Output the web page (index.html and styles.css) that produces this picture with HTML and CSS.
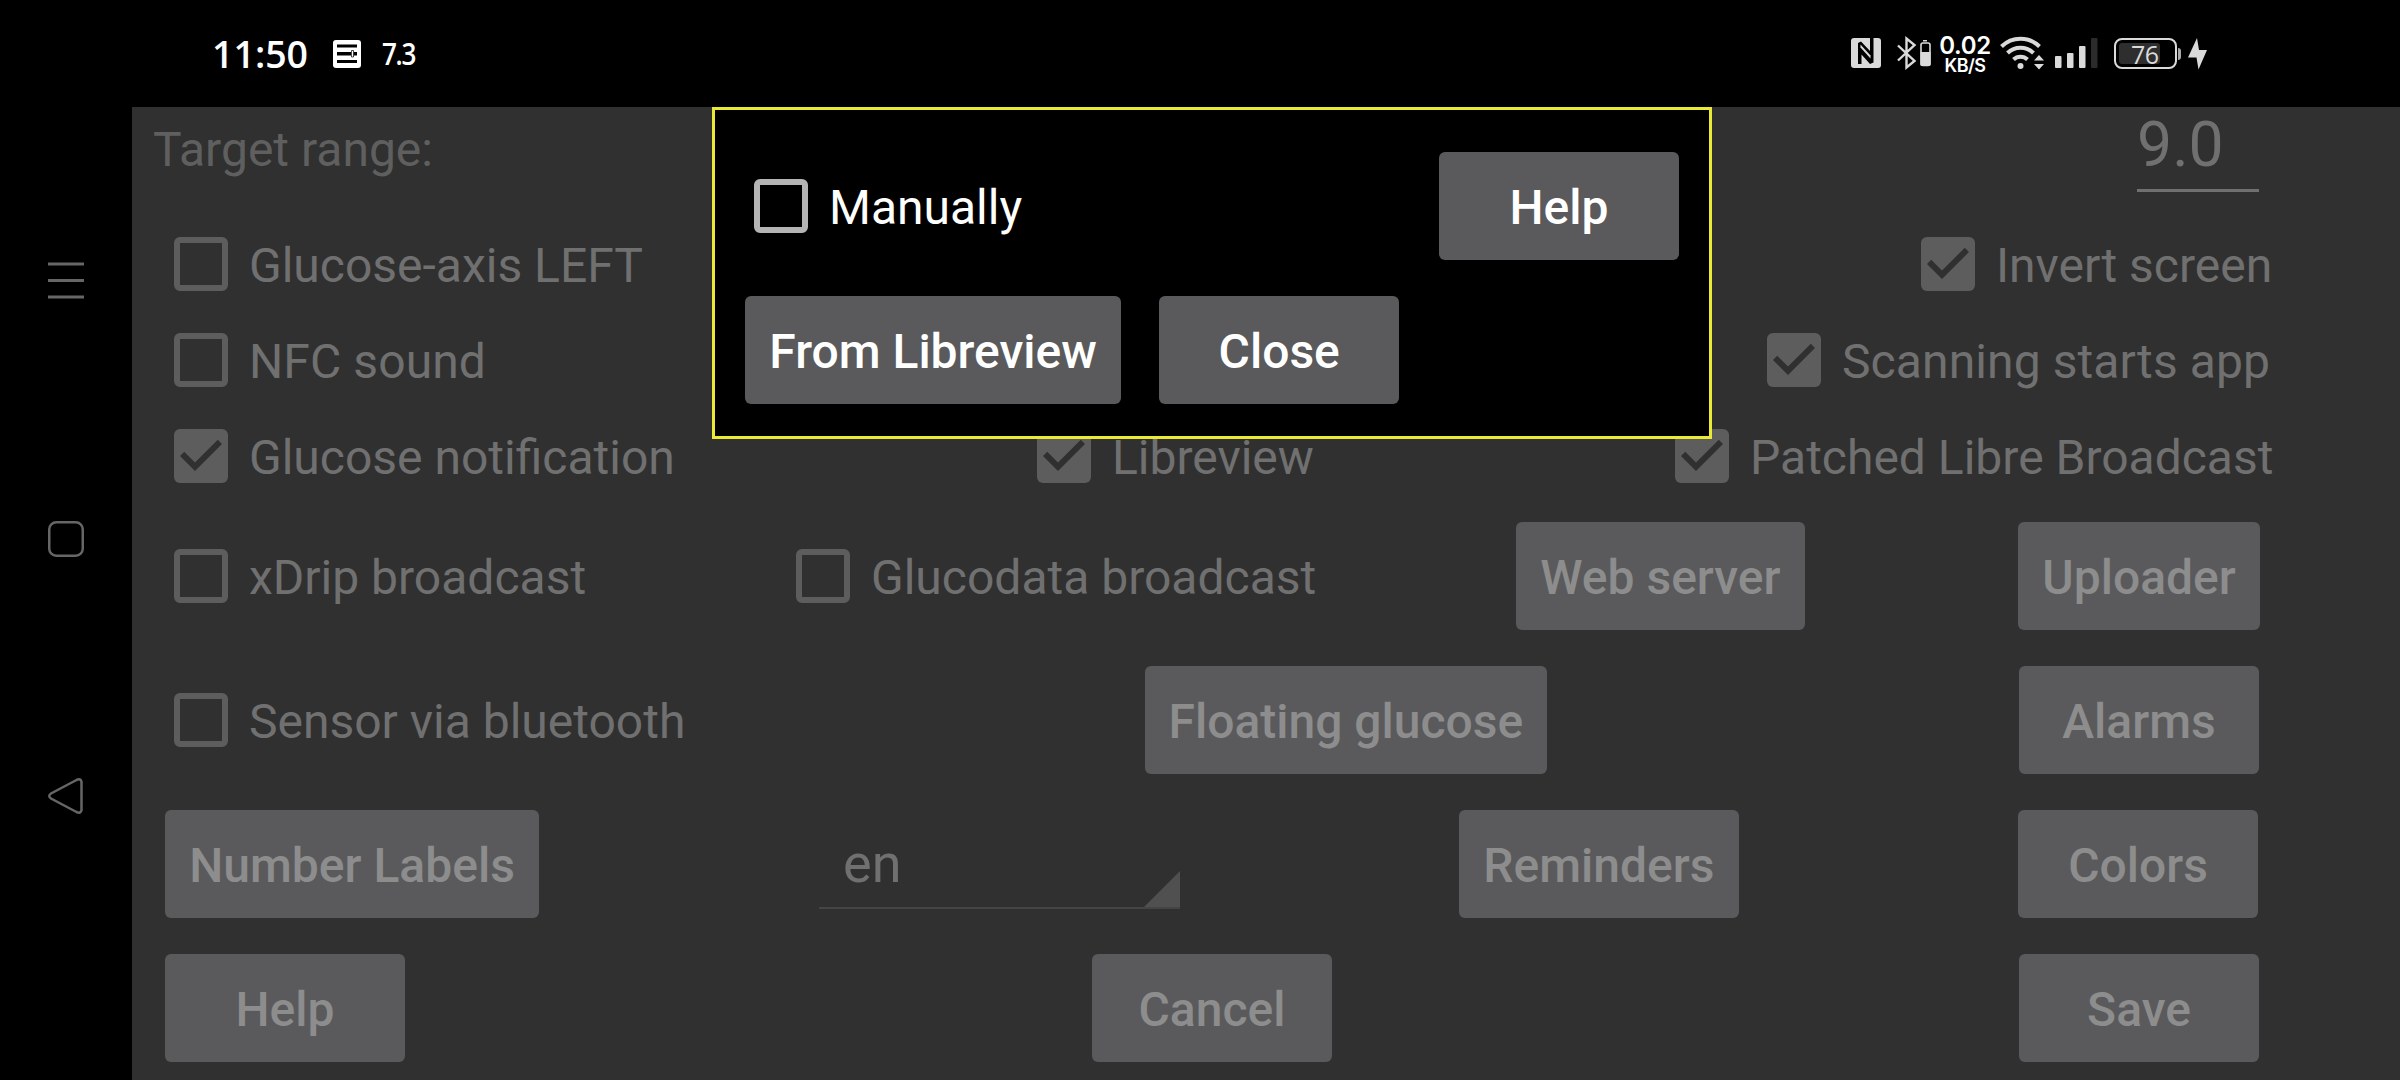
FILE: index.html
```html
<!DOCTYPE html>
<html lang="en">
<head>
<meta charset="utf-8">
<title>Settings</title>
<link rel="stylesheet" href="styles.css">
</head>
<body>
<svg class="defs" width="0" height="0">
  <symbol id="tick" viewBox="0 0 18 18"><path d="M7 14 2 9l1.410-1.410L7 11.170l7.590-7.590L16 5z" fill="#303030"/></symbol>
</svg>
<div class="screen">
  <header class="status">
    <span class="clock">11:50</span>
    <svg class="note" width="28" height="28" viewBox="0 0 28 28"><rect width="28" height="28" rx="3" fill="#fff"/><path d="M4 4.500h20v3H4zM4 12h14v3.500H4zM4 20h20v3H4zM20.500 12H24v3.500h-3.500z" fill="#000"/><path d="M18.500 10.500h2v6.500h-2z" fill="#fff" stroke="#000" stroke-width=".7"/></svg>
    <span class="reading">7.3</span>
    <svg class="nfc" width="30" height="30" viewBox="0 0 30 30"><rect width="30" height="30" rx="3" fill="#dadada"/><path d="M7 26V5l3-1.500 9 9.500V0h3.500v24.500L19 26l-8.500-9.500V26z" fill="#000"/><path d="M9.500 6.500v3l10 11v-3z" fill="#dadada"/></svg>
    <svg class="bt" width="34" height="34" viewBox="0 0 34 34"><path d="M1 9.500 17.500 25 9.500 31.500V2.500L17.500 9 1 24.500" fill="none" stroke="#dadada" stroke-width="2.400"/><path d="M26 4h4v1.500h-4z" fill="#dadada"/><rect x="24" y="7" width="9" height="22.500" rx="2" fill="none" stroke="#dadada" stroke-width="1.600"/><path d="M23.500 16h10v13.500h-10z" fill="#dadada"/></svg>
    <span class="speed"><b class="rate">0.02</b><b class="unit">KB/S</b></span>
    <svg class="wifi" width="46" height="36" viewBox="0 0 46 36"><g fill="none" stroke="#dadada" stroke-width="4"><path d="M1.500 11.500a27 27 0 0 1 38 0"/><path d="M7.500 18a18.500 18.500 0 0 1 26 0"/><path d="M13.500 24.500a10 10 0 0 1 14 0"/></g><circle cx="20.500" cy="31" r="3" fill="#dadada"/><path d="m39 20 5 5.500H34zm0 14.500 5-5.500H34z" fill="#dadada"/></svg>
    <svg class="signal" width="43" height="30" viewBox="0 0 43 30"><g fill="#dadada"><rect y="18" width="6.500" height="12" rx="1"/><rect x="12" y="15" width="6.500" height="15" rx="1"/><rect x="24" y="8" width="6.500" height="22" rx="1"/></g><rect x="36" width="6.500" height="30" rx="1" fill="#2b2b2b"/></svg>
    <span class="battery"><span class="level">76</span></span>
    <svg class="nub" width="3" height="12" viewBox="0 0 3 12"><path d="M0 0a3 3 0 0 1 3 3v6a3 3 0 0 1-3 3z" fill="#aaa"/></svg>
    <svg class="bolt" width="20" height="32" viewBox="0 0 20 32"><path d="M9 0 0 19.500h8.500L10.500 31.500 19 12h-8z" fill="#dadada"/></svg>
  </header>
  <nav class="nav">
    <svg width="36" height="38" viewBox="0 0 36 38"><path d="M0 2h36M0 18.500h36M0 35h36" stroke="#666" stroke-width="3"/></svg>
    <svg width="36" height="36" viewBox="0 0 36 36"><rect x="1.250" y="1.250" width="33.500" height="33.500" rx="7" fill="none" stroke="#666" stroke-width="2.500"/></svg>
    <svg width="36" height="36" viewBox="0 0 36 36"><path d="M28.500 2 3 15.500q-3.500 2.500 0 5L28.500 34q4.500 2 5-2V4q-.5-4-5-2z" fill="none" stroke="#666" stroke-width="2.500"/></svg>
  </nav>
  <main class="settings">
    <div class="row row-range"><span class="caption">Target range:</span><span class="field">9.0</span></div>
    <div class="row row-axis">
      <label class="check"><i class="box"></i><span class="label">Glucose-axis LEFT</span></label>
      <label class="check"><i class="box on"><svg><use href="#tick"/></svg></i><span class="label">Invert screen</span></label>
    </div>
    <div class="row row-sound">
      <label class="check"><i class="box"></i><span class="label">NFC sound</span></label>
      <label class="check"><i class="box on"><svg><use href="#tick"/></svg></i><span class="label">Scanning starts app</span></label>
    </div>
    <div class="row row-notify">
      <label class="check"><i class="box on"><svg><use href="#tick"/></svg></i><span class="label">Glucose notification</span></label>
      <label class="check"><i class="box on"><svg><use href="#tick"/></svg></i><span class="label">Libreview</span></label>
      <label class="check"><i class="box on"><svg><use href="#tick"/></svg></i><span class="label">Patched Libre Broadcast</span></label>
    </div>
    <div class="row row-broadcast">
      <label class="check"><i class="box"></i><span class="label">xDrip broadcast</span></label>
      <label class="check"><i class="box"></i><span class="label">Glucodata broadcast</span></label>
      <button class="btn">Web server</button>
      <button class="btn">Uploader</button>
    </div>
    <div class="row row-sensor">
      <label class="check"><i class="box"></i><span class="label">Sensor via bluetooth</span></label>
      <button class="btn">Floating glucose</button>
      <button class="btn">Alarms</button>
    </div>
    <div class="row row-labels">
      <button class="btn">Number Labels</button>
      <div class="spinner"><span class="value">en</span><svg width="36" height="36" viewBox="0 0 36 36"><path d="M36 0v36H0z" fill="#505050"/></svg></div>
      <button class="btn">Reminders</button>
      <button class="btn">Colors</button>
    </div>
    <div class="row row-actions">
      <button class="btn">Help</button>
      <button class="btn">Cancel</button>
      <button class="btn">Save</button>
    </div>
  </main>
  <section class="dialog">
    <div class="dialog-row spread">
      <label class="check"><i class="box"></i><span class="label">Manually</span></label>
      <button class="btn">Help</button>
    </div>
    <div class="dialog-row">
      <button class="btn">From Libreview</button>
      <button class="btn">Close</button>
    </div>
  </section>
</div>
</body>
</html>
```
FILE: styles.css
```css
* { box-sizing: border-box; }
body { margin: 0; background: #000; font-family: Roboto, sans-serif; }
.defs { position: absolute; }
.screen {
  position: relative;
  display: grid;
  grid-template: 107px 973px / 132px 1fr;
  width: 2400px;
  height: 1080px;
  overflow: hidden;
}

/* Status bar */
.status {
  grid-column: 1 / -1;
  display: flex;
  align-items: flex-start;
  padding-left: 212px;
  color: #fff;
  font-family: "Open Sans", sans-serif;
  line-height: 1;
  white-space: nowrap;
}
.status > * { flex: none; }
.clock { width: 121px; margin-top: 35px; font-size: 37.5px; font-weight: 600; }
.note { margin-top: 40px; }
.reading { width: 40px; margin: 39px 0 0 21px; font-size: 30px; font-weight: 600; letter-spacing: -1.5px; transform: scaleX(.87); transform-origin: left; }
.nfc { margin: 38px 0 0 1429px; }
.bt { margin: 36px 0 0 16px; }
.speed { display: flex; flex-direction: column; align-items: center; gap: 1px; width: 54px; margin: 36px 0 0 7px; font-family: Inter, sans-serif; }
.rate { font-size: 24px; font-weight: 600; line-height: 20px; letter-spacing: -.3px; }
.unit { font-size: 18px; font-weight: 600; line-height: 17px; letter-spacing: -.5px; }
.wifi { margin: 35px 0 0 8px; }
.signal { margin: 38px 0 0 9px; }
.battery { width: 63px; height: 31px; margin: 38px 0 0 16px; padding: 3px; border: 2px solid #dadada; border-radius: 8px; }
.level { display: block; width: 41px; height: 21px; padding-left: 12px; border-radius: 3px; background: #2e2e2e; color: #dadada; font-size: 25px; font-weight: 500; line-height: 22px; letter-spacing: -.6px; }
.nub { margin: 48px 0 0 1px; }
.bolt { margin: 38px 0 0 7px; }

/* System navigation */
.nav { display: flex; flex-direction: column; align-items: center; gap: 221px; padding-top: 154.500px; }

/* Settings screen */
.settings { display: grid; grid-template-rows: 109px repeat(3, 96px) repeat(4, 144px); background: #303030; color: #707070; }
.row { display: grid; align-items: center; justify-items: start; padding-left: 33px; }
.row-range { grid-template-columns: 1984px 1fr; align-items: start; padding-left: 21px; }
.row-axis { grid-template-columns: 1747px 1fr; }
.row-sound { grid-template-columns: 1593px 1fr; letter-spacing: .1px; }
.row-notify { grid-template-columns: 863px 638px 1fr; }
.row-broadcast { grid-template-columns: 622px 729px 502px 1fr; }
.row-sensor { grid-template-columns: 980px 874px 1fr; }
.row-labels { grid-template-columns: 654px 640px 559px 1fr; }
.row-actions { grid-template-columns: 927px 927px 1fr; }
.caption { padding-top: 15px; color: #5f5f5f; font-size: 48px; line-height: 56px; }
.field { width: 122px; height: 85px; padding-top: 1px; border-bottom: 3px solid #707070; font-size: 62.500px; line-height: 74px; }

.check { display: flex; align-items: center; gap: 21px; margin-left: 9px; font-size: 48px; line-height: 56px; white-space: nowrap; }
.label { padding-top: 3px; }
.box { flex: none; width: 54px; height: 54px; border: 6px solid #5d5d5d; border-radius: 6px; }
.box.on { border: 0; background: #5d5d5d; }
.box svg { display: block; width: 54px; height: 54px; }

.btn {
  min-width: 240px;
  height: 108px;
  padding: 3px 24.300px 0;
  border: 0;
  border-radius: 6px;
  background: #5a5a5c;
  color: #8d8d8e;
  font: 500 48px/56px Roboto, sans-serif;
  white-space: nowrap;
}
.row-sensor .btn { padding-inline: 23.500px; }

.spinner { display: flex; align-items: flex-end; justify-content: space-between; width: 361px; height: 72px; margin-top: 18px; padding-left: 24px; border-bottom: 2px solid #454545; }
.value { padding-bottom: 12px; font-size: 54px; line-height: 62px; }

/* Import dialog */
.dialog {
  position: absolute;
  left: 712px;
  top: 107px;
  width: 1000px;
  height: 332px;
  padding: 24px 30px 0;
  border: 3px solid #eaea35;
  background: #000;
  color: #fff;
}
.dialog-row { display: flex; align-items: center; gap: 38px; height: 144px; }
.dialog-row.spread { justify-content: space-between; }
.dialog .box { border-color: #b4b4b4; }
.dialog .btn { color: #fff; }
```
